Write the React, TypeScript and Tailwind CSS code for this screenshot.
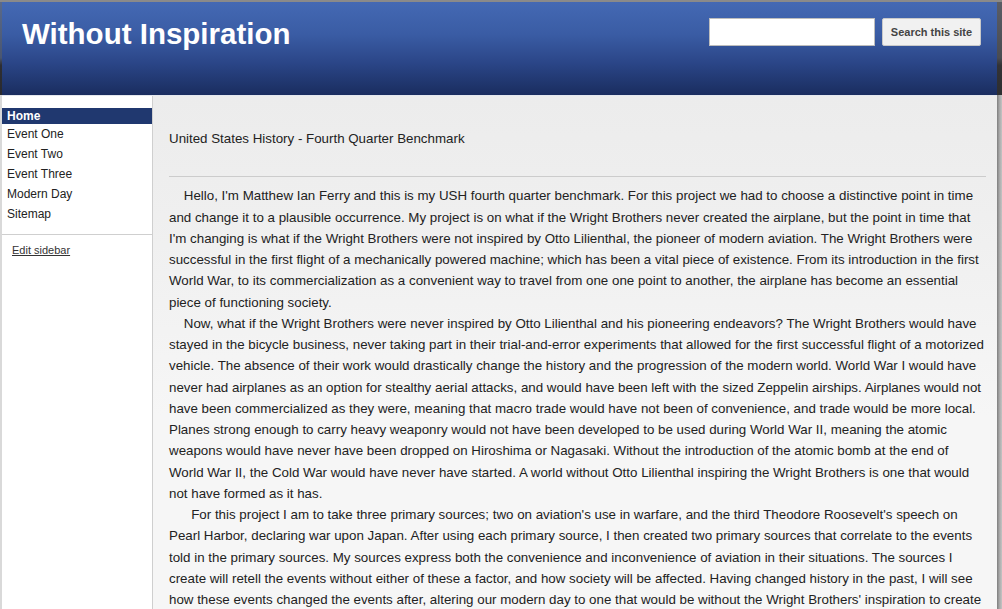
import React from "react";

const NB4 = "\u00a0\u00a0\u00a0\u00a0";
const NB6 = "\u00a0\u00a0\u00a0\u00a0\u00a0\u00a0";

export default function App() {
  const items = ["Event One", "Event Two", "Event Three", "Modern Day", "Sitemap"];
  return (
    <div className="h-[609px] w-full overflow-hidden border-t-2 border-[#8a8a8a] flex font-['Liberation_Sans',Arial,sans-serif] bg-white">
      <div className="w-[2px] flex flex-col">
        <div className="h-[93px] bg-[linear-gradient(to_bottom,#5a6a8a_0%,#4a5670_60%,#2e2e32_68%,#2a2a2e_100%)]" />
        <div className="flex-1 bg-[#d9d9d9]" />
      </div>
      <div className="flex-1 flex flex-col min-w-0">
        <header className="h-[93px] bg-[linear-gradient(to_bottom,#4469b4_0%,#3a5ca4_35%,#2b4688_65%,#1a2d5f_100%)] flex justify-between items-start pl-[20px] pr-[16px]">
          <h1 className="mt-[17px] text-[29.5px] leading-none font-bold text-white">
            Without Inspiration
          </h1>
          <div className="flex gap-[7px] mt-[16px]">
            <input
              type="text"
              className="w-[166px] h-[28px] bg-white border border-[#bdbdbd] outline-none"
            />
            <button className="w-[99px] h-[28px] bg-[#f1f1f1] border border-[#c9c9c9] rounded-[2px] text-[11px] font-bold text-[#444]">
              Search this site
            </button>
          </div>
        </header>
        <div className="h-px bg-[#e4e7ee]" />
        <div className="flex flex-1 min-h-0">
          <aside className="w-[151px] shrink-0 border-r border-[#cfcfcf] bg-white pt-[12px]">
            <div className="h-[16px] leading-[16px] bg-[#20386f] text-white font-bold text-[12px] pl-[5px]">
              Home
            </div>
            {items.map((t) => (
              <div key={t} className="h-[20px] leading-[20px] text-[12px] text-[#222] pl-[5px]">
                {t}
              </div>
            ))}
            <div className="mt-[10px] border-t border-[#cfcfcf] pt-[2px] pl-[10px]">
              <span className="text-[11px] leading-[14px] text-[#333] underline">Edit sidebar</span>
            </div>
          </aside>
          <main className="flex-1 min-w-0 pl-[16px] pr-[11px] pt-[32px] bg-[linear-gradient(to_bottom,#ececec_0px,#efefef_120px,#f6f6f6_320px,#f6f6f6_100%)] text-[13.33px] leading-[21.25px] text-[#222]">
            <div>United States History - Fourth Quarter Benchmark</div>
            <div className="mt-[27px] h-px bg-[#cccccc]" />
            <div className="pt-[8px]">
              <div>
                {NB4}Hello, I'm Matthew Ian Ferry and this is my USH fourth quarter benchmark. For this project we had to choose a distinctive point in time and change it to a plausible occurrence. My project is on what if the Wright Brothers never created the airplane, but the point in time that I'm changing is what if the Wright Brothers were not inspired by Otto Lilienthal, the pioneer of modern aviation. The Wright Brothers were successful in the first flight of a mechanically powered machine; which has been a vital piece of existence. From its introduction in the first World War, to its commercialization as a convenient way to travel from one one point to another, the airplane has become an essential piece of functioning society.
              </div>
              <div>
                {NB4}Now, what if the Wright Brothers were never inspired by Otto Lilienthal and his pioneering endeavors? The Wright Brothers would have stayed in the bicycle business, never taking part in their trial-and-error experiments that allowed for the first successful flight of a motorized vehicle. The absence of their work would drastically change the history and the progression of the modern world. World War I would have never had airplanes as an option for stealthy aerial attacks, and would have been left with the sized Zeppelin airships. Airplanes would not have been commercialized as they were, meaning that macro trade would have not been of convenience, and trade would be more local. Planes strong enough to carry heavy weaponry would not have been developed to be used during World War II, meaning the atomic weapons would have never have been dropped on Hiroshima or Nagasaki. Without the introduction of the atomic bomb at the end of World War II, the Cold War would have never have started. A world without Otto Lilienthal inspiring the Wright Brothers is one that would not have formed as it has.
              </div>
              <div>
                {NB6}For this project I am to take three primary sources; two on aviation's use in warfare, and the third Theodore Roosevelt's speech on Pearl Harbor, declaring war upon Japan. After using each primary source, I then created two primary sources that correlate to the events told in the primary sources. My sources express both the convenience and inconvenience of aviation in their situations. The sources I create will retell the events without either of these a factor, and how society will be affected. Having changed history in the past, I will see how these events changed the events after, altering our modern day to one that would be without the Wright Brothers' inspiration to create the airplane.
              </div>
            </div>
          </main>
        </div>
      </div>
      <div className="w-[5px] flex flex-col">
        <div className="h-[93px] bg-[linear-gradient(to_bottom,#5a5d66_0%,#4a4c52_60%,#333336_68%,#2e2e30_100%)]" />
        <div className="flex-1 bg-[linear-gradient(to_right,#7e7e7e,#a9a9a9_50%,#c4c4c4)]" />
      </div>
    </div>
  );
}
